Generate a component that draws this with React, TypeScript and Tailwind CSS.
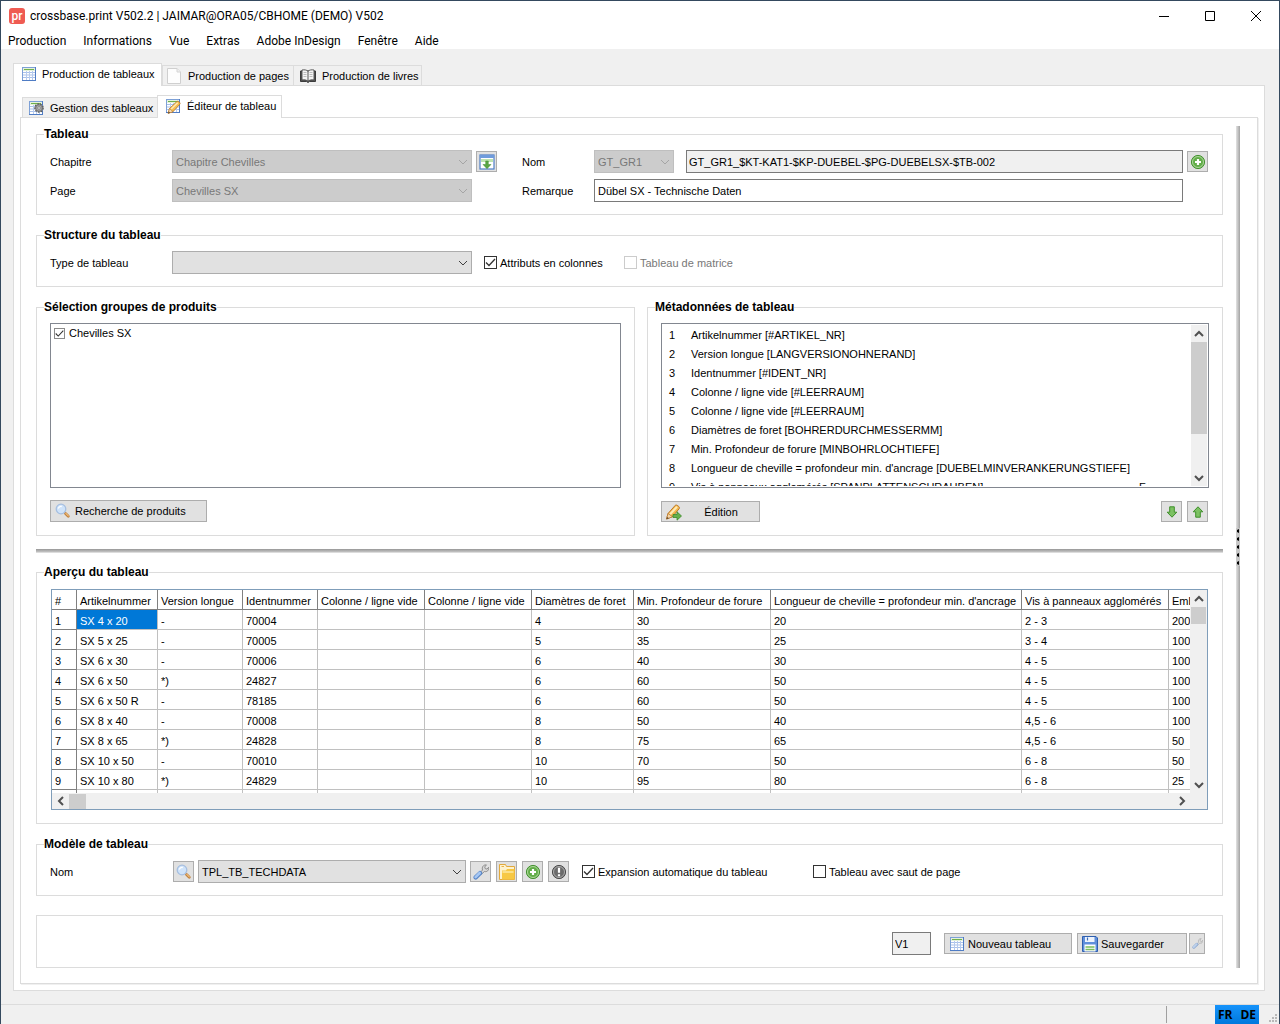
import React, { useState } from "react";

type Kids = { children?: React.ReactNode };

/* ---------- icons ---------- */

const TableArt = () => (
  <>
    <rect x="1.5" y="1.5" width="13" height="13" fill="#fff" stroke="#7da0d6" />
    <rect x="2" y="2" width="12" height="3" fill="#e4f1dc" />
    <path d="M3 3.5h10" stroke="#6fb04c" />
    <path d="M2 6.5h12M2 9h12M2 11.5h12" stroke="#a9c1ea" />
    <path d="M5.5 5v9M8.5 5v9M11.5 5v9" stroke="#b7cbee" />
    <path d="M1 14.5h14M14.5 1v14" stroke="#4f7cc4" />
  </>
);

const TableIcon = ({ className = "h-4 w-4" }: { className?: string }) => (
  <svg viewBox="0 0 16 16" className={className} aria-hidden="true">
    <TableArt />
  </svg>
);

const TableGearIcon = () => (
  <svg viewBox="0 0 16 16" className="h-4 w-4" aria-hidden="true">
    <TableArt />
    <circle cx="11" cy="8" r="4" fill="#9a9a9a" stroke="#5d5d5d" strokeWidth="1.6" strokeDasharray="1.6 1.2" />
    <circle cx="11" cy="8" r="3.2" fill="#a9a9a9" stroke="#6e6e6e" strokeWidth="0.7" />
    <circle cx="11" cy="8" r="1.3" fill="#e8e8e8" stroke="#666" strokeWidth="0.6" />
  </svg>
);

const TablePencilIcon = () => (
  <svg viewBox="0 0 16 16" className="h-4 w-4" aria-hidden="true">
    <TableArt />
    <path d="M4.5 10.5 12 3.4c1-.8 3.800 1.400 3 2.600L8 13.700 3.200 15.300z" fill="#f6bf50" stroke="#b9772a" strokeWidth="0.8" />
    <path d="M6.200 11 12.700 4.800" stroke="#fdeab4" strokeWidth="1.500" />
    <path d="M4.500 10.500 8 13.700 3.200 15.300z" fill="#f6dcb8" stroke="#b9772a" strokeWidth="0.600" />
    <path d="M3 15.500 3.700 13.600 5.200 14.700z" fill="#5a4630" />
  </svg>
);

const PencilArrowIcon = () => (
  <svg viewBox="0 0 18 18" className="h-[18px] w-[18px]" aria-hidden="true">
    <path d="M3 10.500 10.300 2.300c1-1.200 5 1.600 4 3.200L7.500 13.700 1.600 16z" fill="#f6b94e" stroke="#b9772a" />
    <path d="M5 11.300 12 3.800" stroke="#fdebb8" strokeWidth="2" />
    <path d="M3 10.500 7.500 13.700 1.600 16z" fill="#f3d7ae" stroke="#b9772a" strokeWidth="0.700" />
    <path d="M1.400 16.200 2.100 14 3.900 15.200z" fill="#5a4630" />
    <path d="M8 11.500h4V8.800l4.500 4.200-4.500 4.200v-2.700H8z" fill="#67b04c" stroke="#3c8a2a" strokeWidth="0.800" />
  </svg>
);

const PageIcon = () => (
  <svg viewBox="0 0 16 16" className="h-4 w-4" aria-hidden="true">
    <path d="M1.500.500h9.500l3.500 3.500v11.500h-13z" fill="#fdfdfd" stroke="#cfcfcf" />
    <path d="M11 .500V4h3.500" fill="#eee" stroke="#d4d4d4" />
  </svg>
);

const BookIcon = () => (
  <svg viewBox="0 0 16 14" className="h-[14px] w-4" aria-hidden="true">
    <path d="M.500 2v10.500h6l1.500 1 1.500-1h6V2z" fill="#555" stroke="#3b3b3b" />
    <path d="M2 1c2.500-.500 4.500 0 6 1.200C9.500 1 11.500.500 14 1v10c-2.500-.400-4.500 0-6 1.200C6.500 11 4.500 10.600 2 11z" fill="#f4f4f4" stroke="#4a4a4a" strokeWidth="0.900" />
    <path d="M8 2v10" stroke="#555" />
    <path d="M3.500 3.500h3M3.500 5.500h3M3.500 7.500h3M9.500 3.500h3M9.500 5.500h3M9.500 7.500h3" stroke="#b5b5b5" strokeWidth="0.900" />
  </svg>
);

const SearchIcon = () => (
  <svg viewBox="0 0 16 16" className="h-4 w-4" aria-hidden="true">
    <path d="M10.500 10.500l2.800 2.800" stroke="#bf7f3c" strokeWidth="2.800" strokeLinecap="round" />
    <path d="M10.800 10.300l2.500 2.500" stroke="#efbd7a" strokeWidth="1.200" strokeLinecap="round" />
    <circle cx="6" cy="6" r="4.800" fill="#cfe3fa" stroke="#a6bfe0" strokeWidth="1.300" />
    <path d="M3.300 5.500c.500-1.600 2-2.400 3.500-2" stroke="#fff" strokeWidth="1.300" fill="none" />
  </svg>
);

const PlusIcon = () => (
  <svg viewBox="0 0 16 16" className="h-4 w-4" aria-hidden="true">
    <circle cx="8" cy="8" r="6.600" fill="#62ad49" stroke="#469233" />
    <circle cx="8" cy="8" r="5.500" fill="none" stroke="#b5dca4" strokeWidth="0.900" />
    <path d="M8 5v6M5 8h6" stroke="#fff" strokeWidth="2.200" />
  </svg>
);

const AlertIcon = () => (
  <svg viewBox="0 0 16 16" className="h-4 w-4" aria-hidden="true">
    <circle cx="8" cy="8" r="6.600" fill="#6c6c6c" stroke="#4d4d4d" />
    <circle cx="8" cy="8" r="5.500" fill="none" stroke="#b3b3b3" strokeWidth="0.900" />
    <path d="M8 3.800v5M8 10.200v2" stroke="#fff" strokeWidth="2.200" />
  </svg>
);

const WrenchIcon = ({ className = "h-4 w-4" }: { className?: string }) => (
  <svg viewBox="0 0 16 16" className={className} aria-hidden="true">
    <path d="M7 8.800 9.500 6C8.600 3 10.500.600 13.400.900L11.700 3l.600 1.700 1.700.400 1.600-1.800c.600 2.900-1.600 5-4.200 4.200L8.500 10.200z" fill="#d9d9d9" stroke="#858585" strokeWidth="0.900" />
    <path d="M2.700 13.400 7 9.200" stroke="#5a87c8" strokeWidth="4.400" strokeLinecap="round" />
    <path d="M2.600 13.100 6.700 9" stroke="#a6c7f3" strokeWidth="2.600" strokeLinecap="round" />
  </svg>
);

const FolderIcon = () => (
  <svg viewBox="0 0 16 16" className="h-4 w-4" aria-hidden="true">
    <path d="M.500 15.500V.500h6l1 2h8v13z" fill="#fdf2cf" stroke="#e2a93c" />
    <path d="M3 6.500h4l1-1.500h7.500v10.500H3z" fill="#f7c844" />
    <path d="M3.500 8h11" stroke="#fbe08a" strokeWidth="2" />
    <path d="M2.500 2.500h2.500" stroke="#e9b44a" />
  </svg>
);

const ImportIcon = () => (
  <svg viewBox="0 0 16 16" className="h-4 w-4" aria-hidden="true">
    <rect x="1" y="1" width="14" height="14" fill="#fff" stroke="#4f7fc6" strokeWidth="1.200" />
    <rect x="1" y="1" width="14" height="3" fill="#6f9bdc" />
    <rect x="2" y="5" width="12" height="3" fill="#bfe3b0" />
    <path d="M6.700 7h2.600v3.500H12L8 14.700 4 10.500h2.700z" fill="#5aa544" stroke="#3f8a2d" strokeWidth="0.500" />
  </svg>
);

const ArrowIcon = ({ up = false }: { up?: boolean }) => (
  <svg viewBox="0 0 12 12" className="h-3 w-3" aria-hidden="true">
    <path
      d={up ? "M6 .8 10.800 5.800H8.300v5.400H3.700V5.800H1.200z" : "M6 11.200 1.200 6.200h2.500V.8h4.600v5.400h2.500z"}
      fill="#7cc162"
      stroke="#3f8f2b"
    />
  </svg>
);

const SaveIcon = () => (
  <svg viewBox="0 0 16 16" className="h-4 w-4" aria-hidden="true">
    <path d="M.500.500h13.500l1.500 1.500v13.500H.500z" fill="#5f8fdb" stroke="#2f5fae" />
    <rect x="3" y="1" width="9.500" height="5" fill="#eef4fd" />
    <path d="M5.500 1.500v3" stroke="#3c6cb8" strokeWidth="1.200" />
    <rect x="2.500" y="8.500" width="11" height="7" fill="#fff" />
    <path d="M3.500 11h9M3.500 13.500h9" stroke="#79bd5d" strokeWidth="1.400" />
  </svg>
);

const paths = {
  down: "M1 3l4 4 4-4",
  up: "M1 7l4-4 4 4",
  left: "M7 1L3 5l4 4",
  right: "M3 1l4 4-4 4",
};

const Chevron = ({ dir, className }: { dir: keyof typeof paths; className: string }) => (
  <svg viewBox="0 0 10 10" fill="none" stroke="currentColor" className={className} aria-hidden="true">
    <path d={paths[dir]} />
  </svg>
);

/* ---------- controls ---------- */

const Group = ({ title, className = "", children }: Kids & { title: string; className?: string }) => (
  <fieldset className={`min-w-0 border border-[#dcdcdc] px-[13px] ${className}`}>
    <legend className="ml-[-6px] text-xs leading-[13px] font-bold">{title}</legend>
    {children}
  </fieldset>
);

const Select = ({ label, value, disabled, className }: { label: string; value: string; disabled?: boolean; className: string }) => (
  <div className={`relative ${className}`}>
    <select
      aria-label={label}
      disabled={disabled}
      className="h-[23px] w-full appearance-none border border-[#adadad] bg-[#e1e1e1] px-[3px] disabled:border-[#bfbfbf] disabled:bg-[#cccccc] disabled:text-[#787878] disabled:opacity-100"
    >
      <option>{value}</option>
    </select>
    <Chevron
      dir="down"
      className={`pointer-events-none absolute top-[7px] right-1 h-[10px] w-[10px] ${disabled ? "text-[#a5a5a5]" : "text-[#404040]"}`}
    />
  </div>
);

const Check = ({ label, on = false, disabled, small }: { label: string; on?: boolean; disabled?: boolean; small?: boolean }) => {
  const [checked, setChecked] = useState(on);
  return (
    <label className={`flex items-center whitespace-nowrap ${small ? "gap-1" : "gap-[3px]"} ${disabled ? "text-[#787878]" : ""}`}>
      <span className="relative flex">
        <input
          type="checkbox"
          checked={checked}
          disabled={disabled}
          onChange={() => setChecked(!checked)}
          className={`appearance-none border bg-white ${small ? "h-[11px] w-[11px] border-[#8a8a8a]" : "h-[13px] w-[13px] border-[#333333] disabled:border-[#cccccc]"}`}
        />
        {checked && (
          <svg viewBox="0 0 13 13" fill="none" stroke="#333" strokeWidth="1.300" className="pointer-events-none absolute inset-0 h-full w-full" aria-hidden="true">
            <path d="M2 6.500l3 3 6-6.500" />
          </svg>
        )}
      </span>
      {label}
    </label>
  );
};

const IconButton = ({ label, className = "h-[21px] w-[21px]", children }: Kids & { label: string; className?: string }) => (
  <button type="button" aria-label={label} className={`flex shrink-0 items-center justify-center border border-[#adadad] bg-[#e1e1e1] ${className}`}>
    {children}
  </button>
);

const Tab = ({ active, className, children }: Kids & { active?: boolean; className: string }) => (
  <button
    type="button"
    role="tab"
    aria-selected={!!active}
    className={`flex items-center whitespace-nowrap border border-b-0 border-[#dcdcdc] ${active ? "relative -mb-px h-[23px] bg-white pb-[2px]" : "h-5 bg-[#f0f0f0]"} ${className}`}
  >
    {children}
  </button>
);

/* ---------- data ---------- */

const menus = ["Production", "Informations", "Vue", "Extras", "Adobe InDesign", "Fenêtre", "Aide"];

const metadata = [
  "Artikelnummer [#ARTIKEL_NR]",
  "Version longue [LANGVERSIONOHNERAND]",
  "Identnummer [#IDENT_NR]",
  "Colonne / ligne vide [#LEERRAUM]",
  "Colonne / ligne vide [#LEERRAUM]",
  "Diamètres de foret [BOHRERDURCHMESSERMM]",
  "Min. Profondeur de forure [MINBOHRLOCHTIEFE]",
  "Longueur de cheville = profondeur min. d'ancrage [DUEBELMINVERANKERUNGSTIEFE]",
  "Vis à panneaux agglomérés [SPANPLATTENSCHRAUBEN]",
];

const columns = [
  { name: "#", w: 25 },
  { name: "Artikelnummer", w: 81 },
  { name: "Version longue", w: 85 },
  { name: "Identnummer", w: 75 },
  { name: "Colonne / ligne vide", w: 107 },
  { name: "Colonne / ligne vide", w: 107 },
  { name: "Diamètres de foret", w: 102 },
  { name: "Min. Profondeur de forure", w: 137 },
  { name: "Longueur de cheville = profondeur min. d'ancrage", w: 251 },
  { name: "Vis à panneaux agglomérés", w: 147 },
  { name: "Emballage", w: 80 },
];

const rows = [
  ["1", "SX 4 x 20", "-", "70004", "", "", "4", "30", "20", "2 - 3", "200"],
  ["2", "SX 5 x 25", "-", "70005", "", "", "5", "35", "25", "3 - 4", "100"],
  ["3", "SX 6 x 30", "-", "70006", "", "", "6", "40", "30", "4 - 5", "100"],
  ["4", "SX 6 x 50", "*)", "24827", "", "", "6", "60", "50", "4 - 5", "100"],
  ["5", "SX 6 x 50 R", "-", "78185", "", "", "6", "60", "50", "4 - 5", "100"],
  ["6", "SX 8 x 40", "-", "70008", "", "", "8", "50", "40", "4,5 - 6", "100"],
  ["7", "SX 8 x 65", "*)", "24828", "", "", "8", "75", "65", "4,5 - 6", "50"],
  ["8", "SX 10 x 50", "-", "70010", "", "", "10", "70", "50", "6 - 8", "50"],
  ["9", "SX 10 x 80", "*)", "24829", "", "", "10", "95", "80", "6 - 8", "25"],
  ["", "", "", "", "", "", "", "", "", "", ""],
];

/* ---------- sections ---------- */

const TitleBar = () => (
  <header className="bg-white font-[Roboto,sans-serif] text-xs">
    <div className="flex h-[30px] items-center pl-2">
      <span className="flex h-4 w-4 items-center justify-center rounded-[3px] bg-[#ef5b52] pb-px text-[12px] leading-none font-medium text-white">pr</span>
      <h1 className="ml-[5px] flex-1 whitespace-nowrap">crossbase.print V502.2 | JAIMAR@ORA05/CBHOME (DEMO) V502</h1>
      <div className="flex">
        {[
          ["Réduire", "M0 5.500h10"],
          ["Agrandir", "M.500.500h9v9h-9z"],
          ["Fermer", "M0 0l10 10M10 0L0 10"],
        ].map(([name, d]) => (
          <button key={name} type="button" aria-label={name} className="flex h-[30px] w-[46px] items-center justify-center">
            <svg viewBox="0 0 10 10" className="h-[10px] w-[10px] overflow-visible" fill="none" stroke="#000" aria-hidden="true">
              <path d={d} />
            </svg>
          </button>
        ))}
      </div>
    </div>
    <nav className="flex h-[18px] items-end gap-[17px] pl-[7px]">
      {menus.map((m) => (
        <button key={m} type="button" className="whitespace-nowrap">
          {m}
        </button>
      ))}
    </nav>
  </header>
);

const TableauGroup = () => (
  <Group title="Tableau" className="pt-[9px] pb-3">
    <div className="flex flex-col gap-[6px]">
      <div className="flex items-center">
        <span className="w-[122px]">Chapitre</span>
        <Select label="Chapitre" value="Chapitre Chevilles" disabled className="w-[300px]" />
        <div className="flex w-[50px] pl-1">
          <IconButton label="Importer">
            <ImportIcon />
          </IconButton>
        </div>
        <label htmlFor="nom" className="w-[72px]">
          Nom
        </label>
        <Select label="Groupe" value="GT_GR1" disabled className="w-20" />
        <input
          id="nom"
          readOnly
          defaultValue="GT_GR1_$KT-KAT1-$KP-DUEBEL-$PG-DUEBELSX-$TB-002"
          className="ml-3 h-[23px] min-w-0 flex-1 border border-[#7a7a7a] bg-[#f0f0f0] px-[2px] outline-none"
        />
        <div className="ml-1 pr-px">
          <IconButton label="Ajouter">
            <PlusIcon />
          </IconButton>
        </div>
      </div>
      <div className="flex items-center pr-[26px]">
        <span className="w-[122px]">Page</span>
        <Select label="Page" value="Chevilles SX" disabled className="mr-[50px] w-[300px]" />
        <label htmlFor="remarque" className="w-[72px]">
          Remarque
        </label>
        <input
          id="remarque"
          defaultValue="Dübel SX - Technische Daten"
          className="h-[23px] min-w-0 flex-1 border border-[#7a7a7a] bg-white px-[3px] outline-none"
        />
      </div>
    </div>
  </Group>
);

const StructureGroup = () => (
  <Group title="Structure du tableau" className="mt-[14px] pt-[9px] pb-3">
    <div className="flex items-center">
      <span className="w-[122px]">Type de tableau</span>
      <Select label="Type de tableau" value="" className="mr-3 w-[300px]" />
      <div className="w-[140px]">
        <Check label="Attributs en colonnes" on />
      </div>
      <Check label="Tableau de matrice" disabled />
    </div>
  </Group>
);

const ProductsGroup = () => (
  <Group title="Sélection groupes de produits" className="pt-[9px] pb-[13px]">
    <div className="h-[165px] border border-[#828790] bg-white px-[3px] py-[2px]">
      <Check label="Chevilles SX" on small />
    </div>
    <button type="button" className="mt-3 flex h-[22px] w-[157px] items-center gap-1 whitespace-nowrap border border-[#adadad] bg-[#e1e1e1] pl-1">
      <SearchIcon />
      Recherche de produits
    </button>
  </Group>
);

const MetadataGroup = () => (
  <Group title="Métadonnées de tableau" className="pt-[9px] pb-[13px]">
    <div className="flex h-[165px] border border-[#828790] bg-white p-px">
      <ol className="min-w-0 flex-1 overflow-x-hidden overflow-y-auto [scrollbar-width:none]">
        {metadata.map((m, i) => (
          <li key={i} className="flex h-[19px] items-center whitespace-nowrap pl-[6px]">
            <span className="w-[22px]">{i + 1}</span>
            <span className="flex-1">{m}</span>
            {i === 8 && <span className="w-[52px]">F</span>}
          </li>
        ))}
      </ol>
      <div className="flex w-4 flex-col bg-[#f0f0f0] text-[#505050]">
        <div className="flex h-[17px] items-center justify-center">
          <Chevron dir="up" className="h-[10px] w-[10px] stroke-2" />
        </div>
        <div className="h-[92px] bg-[#cdcdcd]" />
        <div className="mt-auto flex h-[17px] items-center justify-center">
          <Chevron dir="down" className="h-[10px] w-[10px] stroke-2" />
        </div>
      </div>
    </div>
    <div className="mt-[13px] flex gap-[5px] pr-px">
      <button type="button" className="mr-auto flex h-[21px] w-[99px] items-center border border-[#adadad] bg-[#e1e1e1] pl-[3px]">
        <PencilArrowIcon />
        <span className="flex-1 text-center">Édition</span>
      </button>
      <IconButton label="Descendre">
        <ArrowIcon />
      </IconButton>
      <IconButton label="Monter">
        <ArrowIcon up />
      </IconButton>
    </div>
  </Group>
);

const PreviewGroup = () => (
  <Group title="Aperçu du tableau" className="pt-[10px] pb-[13px]">
    <div className="mx-px border border-[#7f9db9] bg-[#f0f0f0]">
      <div className="flex">
        <div className="h-[203px] min-w-0 flex-1 overflow-hidden bg-white">
          <table className="w-[1197px] table-fixed border-separate border-spacing-0 text-left">
            <colgroup>
              {columns.map((c, i) => (
                <col key={i} style={{ width: c.w }} />
              ))}
            </colgroup>
            <thead>
              <tr className="h-5">
                {columns.map((c, i) => (
                  <th key={i} className="h-5 whitespace-nowrap border-r border-b border-[#808080] py-0 pt-[3px] pl-[3px] leading-4 font-normal">
                    {c.name}
                  </th>
                ))}
              </tr>
            </thead>
            <tbody>
              {rows.map((r, y) => (
                <tr key={y} className="h-5">
                  {r.map((v, x) => (
                    <td
                      key={x}
                      className={`h-5 whitespace-nowrap border-r border-b py-0 pt-[3px] pl-[3px] leading-4 ${x === 0 ? "border-[#808080]" : "border-[#c0c0c0]"} ${
                        x === 1 && y === 0 ? "bg-[#0078d7] text-white" : ""
                      }`}
                    >
                      {v}
                    </td>
                  ))}
                </tr>
              ))}
            </tbody>
          </table>
        </div>
        <div className="flex w-[17px] flex-col text-[#505050]">
          <div className="flex h-[17px] items-center justify-center">
            <Chevron dir="up" className="h-[10px] w-[10px] stroke-2" />
          </div>
          <div className="mx-px h-[17px] bg-[#cdcdcd]" />
          <div className="mt-auto flex h-[17px] items-center justify-center">
            <Chevron dir="down" className="h-[10px] w-[10px] stroke-2" />
          </div>
        </div>
      </div>
      <div className="flex h-4 items-center pr-[17px] text-[#505050]">
        <div className="flex w-[17px] justify-center">
          <Chevron dir="left" className="h-[10px] w-[10px] stroke-2" />
        </div>
        <div className="h-[15px] w-[17px] bg-[#cdcdcd]" />
        <div className="ml-auto flex w-[17px] justify-center">
          <Chevron dir="right" className="h-[10px] w-[10px] stroke-2" />
        </div>
      </div>
    </div>
  </Group>
);

const ModelGroup = () => (
  <Group title="Modèle de tableau" className="mt-[14px] pt-[9px] pb-3">
    <div className="flex items-center">
      <span className="w-[123px]">Nom</span>
      <div className="flex items-center gap-1">
        <IconButton label="Rechercher">
          <SearchIcon />
        </IconButton>
        <Select label="Nom du modèle" value="TPL_TB_TECHDATA" className="w-[268px]" />
        <div className="flex gap-[5px]">
          <IconButton label="Configurer">
            <WrenchIcon />
          </IconButton>
          <IconButton label="Ouvrir">
            <FolderIcon />
          </IconButton>
          <IconButton label="Ajouter un modèle">
            <PlusIcon />
          </IconButton>
          <IconButton label="Avertissement">
            <AlertIcon />
          </IconButton>
        </div>
      </div>
      <div className="ml-[13px] w-[231px]">
        <Check label="Expansion automatique du tableau" on />
      </div>
      <Check label="Tableau avec saut de page" />
    </div>
  </Group>
);

const Actions = () => (
  <div className="mt-[19px] flex items-center justify-end border border-[#dcdcdc] pt-4 pr-[17px] pb-3">
    <input aria-label="Version" readOnly defaultValue="V1" className="mr-[13px] h-[23px] w-[39px] border border-[#7a7a7a] bg-[#f0f0f0] px-[2px] outline-none" />
    <button type="button" className="mr-[5px] flex h-[21px] w-32 items-center gap-[3px] whitespace-nowrap border border-[#adadad] bg-[#e1e1e1] pl-1">
      <TableIcon />
      Nouveau tableau
    </button>
    <button type="button" className="mr-[2px] flex h-[21px] w-[110px] items-center gap-[3px] whitespace-nowrap border border-[#adadad] bg-[#e1e1e1] pl-1">
      <SaveIcon />
      Sauvegarder
    </button>
    <IconButton label="Options" className="h-[21px] w-4">
      <WrenchIcon className="h-[11px] w-[11px] opacity-60" />
    </IconButton>
  </div>
);

export default function App() {
  return (
    <div className="flex min-h-screen flex-col border border-[#34495e] bg-[#f0f0f0] font-['Liberation_Sans',Arial,sans-serif] text-[11px] leading-[14px] text-black">
      <TitleBar />

      <main className="mx-3 mt-[14px] mr-[14px] flex-1">
        <div role="tablist" className="flex items-end">
          <Tab active className="w-[149px] gap-[5px] pl-[7px]">
            <TableIcon />
            Production de tableaux
          </Tab>
          <Tab className="w-[132px] gap-[6px] pl-[3px]">
            <PageIcon />
            Production de pages
          </Tab>
          <Tab className="-ml-px w-[129px] gap-[6px] pl-[6px]">
            <BookIcon />
            Production de livres
          </Tab>
        </div>

        <div className="border border-[#dcdcdc] bg-white pt-[9px] pr-[6px] pb-[6px] pl-[6px]">
          <div role="tablist" className="flex items-end pl-[2px]">
            <Tab className="w-[136px] gap-[6px] pl-[5px]">
              <TableGearIcon />
              Gestion des tableaux
            </Tab>
            <Tab active className="-ml-px w-[125px] gap-[6px] pl-[7px]">
              <TablePencilIcon />
              Éditeur de tableau
            </Tab>
          </div>

          <div className="flex border border-[#dcdcdc] bg-white pr-[17px] pb-[15px] pl-[15px] shadow-[1px_1px_0_#f0f0f0]">
            <div className="min-w-0 flex-1 pt-[10px]">
              <TableauGroup />
              <StructureGroup />
              <div className="mt-[14px] grid grid-cols-[599fr_576fr] gap-3">
                <ProductsGroup />
                <MetadataGroup />
              </div>
              <div className="my-[13px] h-1 border-b border-[#dcdcdc] bg-linear-to-b from-[#979797] to-[#c4c4c4]" />
              <PreviewGroup />
              <ModelGroup />
              <Actions />
            </div>
            <div className="mt-2 ml-[13px] flex w-1 flex-col justify-center bg-linear-to-r from-[#e3e3e3] to-[#a3a3a3]">
              <svg viewBox="0 0 4 38" className="h-[38px] w-1" aria-hidden="true">
                <path d="M0 0h4v38H0z" fill="#c8c8c8" />
                <path d="M3 1v4L1 4V2zM3 9v4l-2-1v-2zM3 17v4l-2-1v-2zM3 25v4l-2-1v-2zM3 33v4l-2-1v-2z" fill="#000" />
              </svg>
            </div>
          </div>
        </div>
      </main>

      <footer className="mt-[13px] flex h-5 items-stretch border-t border-[#dcdcdc]">
        <div className="my-px flex-1 border-r border-[#a0a0a0]" />
        <div className="w-12" />
        <div className="flex w-11 items-center justify-between bg-linear-to-b from-[#1593fb] to-[#0078dc] px-[3px] font-['Open_Sans',sans-serif] text-xs font-bold">
          <span>FR</span>
          <span>DE</span>
        </div>
        <div className="flex w-5 items-end justify-end p-[2px]">
          <svg viewBox="0 0 8 8" className="h-2 w-2" fill="#b8b8b8" aria-hidden="true">
            <path d="M6 0h2v2H6zM3 3h2v2H3zM6 3h2v2H6zM0 6h2v2H0zM3 6h2v2H3zM6 6h2v2H6z" />
          </svg>
        </div>
      </footer>
    </div>
  );
}
